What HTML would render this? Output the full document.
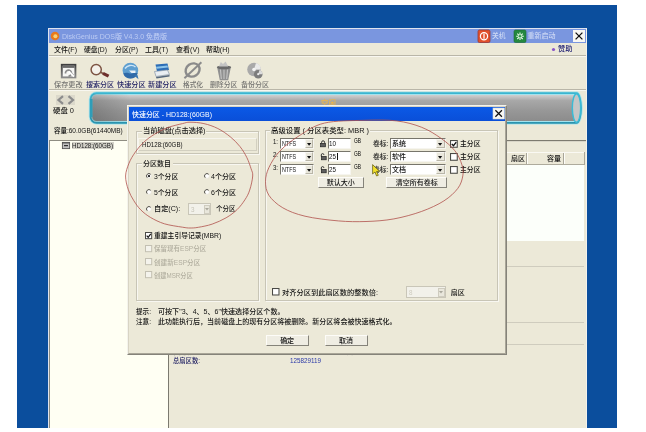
<!DOCTYPE html>
<html lang="zh-CN"><head><meta charset="utf-8"><title>DiskGenius</title>
<style>
html,body{margin:0;padding:0;background:#fff;}
body{width:646px;height:432px;overflow:hidden;position:relative;font-family:"Liberation Sans", "Noto Sans CJK SC", sans-serif;}
#root{position:absolute;left:0;top:0;width:646px;height:432px;overflow:hidden;will-change:transform;filter:blur(.42px);}
#root div{position:absolute;box-sizing:border-box;}
#root svg{position:absolute;overflow:visible;}
.t{position:absolute;white-space:nowrap;transform-origin:0 50%;font-weight:500;}
</style></head><body><div id="root">
<div style="left:17px;top:5px;width:600.00px;height:422.50px;background:#0b4e9d;"></div>
<div style="left:47.5px;top:27.5px;width:539.00px;height:400.00px;background:#ece9d8;border-left:1px solid #dfe3ee;border-top:1px solid #dfe3ee;border-right:1.500px solid #f3f2ec;"></div>
<div style="left:48.5px;top:28.5px;width:537.00px;height:14.50px;background:#7a96df;"></div>
<svg style="left:49.5px;top:31px" width="10" height="10" viewBox="0 0 10 10"><circle cx="5" cy="5" r="4.3" fill="#e8791c"/><circle cx="5.4" cy="5.2" r="2" fill="#f6d27a"/></svg>
<span id="t0" class="t" style="left:62px;top:31.50px;font-size:7px;line-height:9px;color:#bccbf3;transform:scaleX(0.9997);">DiskGenius DOS版 V4.3.0 免费版</span>
<svg style="left:478px;top:29.5px" width="12" height="12.5" viewBox="0 0 12 12.5"><rect x="0" y="0" width="12" height="12.5" rx="1.5" fill="#e2502c" stroke="#9a3a34" stroke-width=".8"/><circle cx="6" cy="6.3" r="3.6" fill="none" stroke="#fff" stroke-width="1.2"/><rect x="5.4" y="3.6" width="1.2" height="5.2" fill="#fff"/></svg>
<span id="t1" class="t" style="left:492px;top:30.50px;font-size:7px;line-height:9px;color:#cdd8f4;transform:scaleX(0.9643);">关机</span>
<svg style="left:514px;top:29.5px" width="12" height="12.5" viewBox="0 0 12 12.5"><rect x="0" y="0" width="12" height="12.5" rx="1.5" fill="#24883f" stroke="#1c6a33" stroke-width=".6"/><g stroke="#eafbe9" stroke-width="1.1"><path d="M6 2.5v7.6M2.2 6.3h7.6M3.3 3.6l5.4 5.4M8.7 3.6l-5.4 5.4"/></g><circle cx="6" cy="6.3" r="1.3" fill="#2f9a49"/></svg>
<span id="t2" class="t" style="left:527.5px;top:30.50px;font-size:7px;line-height:9px;color:#cdd8f4;transform:scaleX(1.0000);">重新启动</span>
<svg style="left:572.5px;top:30px" width="12" height="12" viewBox="0 0 12 12"><rect x="0" y="0" width="12" height="12" fill="#f7f7f3"/><path d="M2.6 2.6l6.8 6.8M9.4 2.6l-6.8 6.8" stroke="#111" stroke-width="1.3"/></svg>
<span id="t3" class="t" style="left:54px;top:45.30px;font-size:7px;line-height:9px;color:#111;transform:scaleX(1.0020);">文件(F)</span>
<span id="t4" class="t" style="left:84px;top:45.30px;font-size:7px;line-height:9px;color:#111;transform:scaleX(0.9697);">硬盘(D)</span>
<span id="t5" class="t" style="left:115px;top:45.30px;font-size:7px;line-height:9px;color:#111;transform:scaleX(0.9853);">分区(P)</span>
<span id="t6" class="t" style="left:145px;top:45.30px;font-size:7px;line-height:9px;color:#111;transform:scaleX(1.0020);">工具(T)</span>
<span id="t7" class="t" style="left:175.5px;top:45.30px;font-size:7px;line-height:9px;color:#111;transform:scaleX(1.0067);">查看(V)</span>
<span id="t8" class="t" style="left:205.75px;top:45.30px;font-size:7px;line-height:9px;color:#111;transform:scaleX(0.9908);">帮助(H)</span>
<svg style="left:551px;top:46.7px" width="5" height="5" viewBox="0 0 5 5"><circle cx="2.5" cy="2.5" r="1.6" fill="#8a55c8"/></svg>
<span id="t9" class="t" style="left:558px;top:44.40px;font-size:7px;line-height:9px;color:#1a1a70;transform:scaleX(1.0357);">赞助</span>
<div style="left:48.5px;top:55px;width:537.00px;height:1.00px;background:#b9b6a8;"></div>
<div style="left:48.5px;top:56px;width:537.00px;height:1.00px;background:#f8f7f0;"></div>
<div style="left:48.5px;top:89.3px;width:537.00px;height:1.00px;background:#b9b6a8;"></div>
<div style="left:48.5px;top:90.3px;width:537.00px;height:0.90px;background:#f8f7f0;"></div>
<span id="t10" class="t" style="left:54px;top:80.10px;font-size:7px;line-height:9px;color:#747471;transform:scaleX(1.0179);">保存更改</span>
<span id="t11" class="t" style="left:86px;top:80.10px;font-size:7px;line-height:9px;color:#1b1b60;transform:scaleX(1.0000);">搜索分区</span>
<span id="t12" class="t" style="left:116.5px;top:80.10px;font-size:7px;line-height:9px;color:#1b1b60;transform:scaleX(1.0179);">快速分区</span>
<span id="t13" class="t" style="left:147.5px;top:80.10px;font-size:7px;line-height:9px;color:#1b1b60;transform:scaleX(1.0179);">新建分区</span>
<span id="t14" class="t" style="left:183px;top:80.10px;font-size:7px;line-height:9px;color:#747471;transform:scaleX(0.9524);">格式化</span>
<span id="t15" class="t" style="left:209.5px;top:80.10px;font-size:7px;line-height:9px;color:#747471;transform:scaleX(0.9821);">删除分区</span>
<span id="t16" class="t" style="left:241px;top:80.10px;font-size:7px;line-height:9px;color:#747471;transform:scaleX(1.0000);">备份分区</span>
<svg style="left:60px;top:63px" width="17" height="16" viewBox="0 0 17 16"><defs><linearGradient id="sv" x1="0" y1="0" x2="0" y2="1"><stop offset="0" stop-color="#3f3f3f"/><stop offset="1" stop-color="#8a8a8a"/></linearGradient></defs><rect x="1.800" y="1.800" width="13.600" height="12.600" fill="#f6f6f4" stroke="url(#sv)" stroke-width="1.900"/><rect x="2.600" y="2.600" width="12" height="2.300" fill="#6a6a6a"/><path d="M5.500 10.500a3 3 0 1 1 3 2.600" fill="none" stroke="#8d8d8d" stroke-width="1.700"/><path d="M9 8.500l5 5" stroke="#fff" stroke-width="1.800"/><path d="M10 8.200l4.600 4.500" stroke="#9a9a9a" stroke-width=".7"/></svg>
<svg style="left:88px;top:62px" width="23" height="18" viewBox="0 0 23 18"><circle cx="8.200" cy="7.600" r="5.100" fill="#f4f1ea" stroke="#7d5443" stroke-width="1.500"/><path d="M12.600 10.300l3 1.500" stroke="#7d5443" stroke-width="1.600"/><path d="M15 11.300l5.600 2.900" stroke="#6e2f2c" stroke-width="3.200"/></svg>
<svg style="left:121px;top:61.5px" width="20" height="19" viewBox="0 0 20 19"><circle cx="9.4" cy="8.6" r="7.8" fill="#5f9fd0"/><path d="M2.2 11.5a7.8 7.8 0 0 0 14.6 0c-2-1.6-4-.2-6 0s-5.6-1.8-8.600 0z" fill="#2f6aa8"/><path d="M4 6.5c2-3 7-4.500 10.500-1.500" stroke="#cfe6f6" stroke-width="1.400" fill="none"/><path d="M8 8.500h6.500v2.500h-4z" fill="#e8f0f6"/><path d="M13 13.500l4.500 3.800-1-4.300z" fill="#3a78b4"/></svg>
<svg style="left:152px;top:62px" width="20" height="18" viewBox="0 0 20 18"><path d="M3.500 2.500l12-1 1.500 6.500-12 1.500z" fill="#2c6db6"/><path d="M4 4.700l11.500-1.200.5 1.900-11.500 1.300z" fill="#8cc4ea"/><path d="M2.500 9.500l13-1.500 2 4.500-13.500 2z" fill="#e9eef2" stroke="#8795a6" stroke-width=".7"/><path d="M4 15l13.500-2v1.600l-13 2z" fill="#55677c"/></svg>
<svg style="left:183px;top:61px" width="20" height="20" viewBox="0 0 20 20"><ellipse cx="9.600" cy="9" rx="7.300" ry="6.300" transform="rotate(-35 9.600 9)" fill="none" stroke="#8b8b8b" stroke-width="2.400"/><path d="M1.400 17.300L18.400 1.200" stroke="#8b8b8b" stroke-width="1.900"/></svg>
<svg style="left:213.500px;top:60.500px" width="20" height="20" viewBox="0 0 20 20"><path d="M3.200 6.500h13.600l-2.600 12.700h-8.400z" fill="#909090"/><path d="M6.500 8.500l.8 9.500M10 8.500v9.500M13.500 8.500l-.8 9.500" stroke="#d8d8d8" stroke-width=".8"/><ellipse cx="10" cy="6.300" rx="7.200" ry="1.900" fill="#6a6a6a"/><path d="M5 5.400l1.800-4.400 2.200 2 2.600-2.600 2.600 5z" fill="#c4c4c4"/></svg>
<svg style="left:245px;top:61px" width="20" height="20" viewBox="0 0 20 20"><circle cx="9" cy="8.500" r="6.800" fill="#a9a9a9"/><path d="M9 8.500L15.800 8.500A6.800 6.800 0 0 0 11 2z" fill="#e9e9e9"/><circle cx="9" cy="8.500" r="1.800" fill="#f3f3f3"/><circle cx="13.200" cy="13.200" r="4.300" fill="#7c7c7c"/><path d="M13.200 13.200l4.300 0a4.300 4.300 0 0 0-3-4.100z" fill="#dcdcdc"/><circle cx="13.200" cy="13.200" r="1.100" fill="#eee"/></svg>
<div style="left:55.5px;top:94.5px;width:19.50px;height:10.00px;background:#dcd9cb;"></div>
<svg style="left:55.5px;top:94.5px" width="19.5" height="10" viewBox="0 0 19.5 10"><path d="M7 1.200L2.500 5 7 8.800" fill="none" stroke="#8c8c8c" stroke-width="2.200"/><path d="M12.500 1.200L17 5 12.500 8.800" fill="none" stroke="#8c8c8c" stroke-width="2.200"/></svg>
<span id="t17" class="t" style="left:53px;top:106.00px;font-size:7px;line-height:9px;color:#111;transform:scaleX(1.0583);">硬盘 0</span>
<svg style="left:0;top:0" width="646" height="432" viewBox="0 0 646 432">
<defs><linearGradient id="cy" x1="0" y1="0" x2="0" y2="1"><stop offset="0" stop-color="#dadada"/><stop offset=".1" stop-color="#c8c8c8"/><stop offset=".25" stop-color="#a8a8a8"/><stop offset=".6" stop-color="#979797"/><stop offset="1" stop-color="#8a8a8a"/></linearGradient>
<linearGradient id="cl" x1="0" y1="0" x2="1" y2="0"><stop offset="0" stop-color="#000" stop-opacity=".16"/><stop offset="1" stop-color="#000" stop-opacity="0"/></linearGradient><linearGradient id="cb" x1="0" y1="0" x2="0" y2="1"><stop offset="0" stop-color="#3cb6d0"/><stop offset="1" stop-color="#2a93ae"/></linearGradient></defs>
<path d="M96.500 93.200H576.500a4.500 14.800 0 0 1 0 29.600H96.500a6 6 0 0 1-6-6V99.200a6 6 0 0 1 6-6z" fill="url(#cy)" stroke="#a3e3ee" stroke-width="3.400"/>
<path d="M96.500 93.200H576.500a4.500 14.800 0 0 1 0 29.600H96.500a6 6 0 0 1-6-6V99.200a6 6 0 0 1 6-6z" fill="none" stroke="url(#cb)" stroke-width="1.700"/>
<rect x="91" y="94" width="40" height="28" rx="5" fill="url(#cl)"/><path d="M91.300 99V117" stroke="#2f9db8" stroke-width="2.400"/>
<ellipse cx="576.500" cy="108" rx="4.200" ry="14.300" fill="#c6c6c6" stroke="#3bbbd6" stroke-width="1.500"/>
</svg>
<span id="t18" class="t" style="left:320.5px;top:98.80px;font-size:8px;line-height:10px;color:#e2b458;transform:scaleX(0.9375);font-weight:700;">空闲</span>
<span id="t19" class="t" style="left:53.75px;top:125.50px;font-size:7px;line-height:9px;color:#111;transform:scaleX(0.9251);">容量:60.0GB(61440MB)</span>
<div style="left:48.5px;top:139.5px;width:119.50px;height:288.50px;background:#fffff3;border-top:1px solid #8f8d82;border-left:1px solid #8f8d82;"></div>
<div style="left:167.7px;top:139.5px;width:1.10px;height:288.50px;background:#7c7a6f;"></div>
<svg style="left:62px;top:142px" width="8" height="7" viewBox="0 0 8 7"><rect x=".4" y=".4" width="7.200" height="6.200" fill="#c2c2c2" stroke="#555" stroke-width=".9"/><path d="M.4 1h7.200" stroke="#444" stroke-width=".8"/><path d="M2 3.700h4" stroke="#111" stroke-width="1"/></svg>
<div style="left:71.5px;top:141.8px;width:42.30px;height:7.70px;background:#d3d1c8;"></div>
<span id="t20" class="t" style="left:72.3px;top:141.10px;font-size:7px;line-height:9px;color:#222;transform:scaleX(0.8856);">HD128:(60GB)</span>
<div style="left:169px;top:140px;width:416.50px;height:1.00px;background:#7d7b70;"></div>
<div style="left:169px;top:141px;width:416.50px;height:1.00px;background:#d9d6c8;"></div>
<div style="left:169px;top:152px;width:415.50px;height:12.50px;background:#ece9d8;border-bottom:1px solid #aeab9c;border-top:1px solid #faf9f3;"></div>
<div style="left:169px;top:164.5px;width:415.00px;height:76.80px;background:#fcfffa;"></div>
<div style="left:526px;top:153px;width:1.00px;height:10.50px;background:#a9a698;"></div>
<div style="left:527px;top:153px;width:1.00px;height:10.50px;background:#fdfdf8;"></div>
<div style="left:562.5px;top:153px;width:1.00px;height:10.50px;background:#a9a698;"></div>
<div style="left:563.5px;top:153px;width:1.00px;height:10.50px;background:#fdfdf8;"></div>
<div style="left:583.5px;top:152px;width:1.00px;height:12.50px;background:#a9a698;"></div>
<span id="t21" class="t" style="left:511px;top:153.80px;font-size:7px;line-height:9px;color:#111;transform:scaleX(1.0000);">扇区</span>
<span id="t22" class="t" style="left:547px;top:153.80px;font-size:7px;line-height:9px;color:#111;transform:scaleX(1.0000);">容量</span>
<div style="left:169px;top:266.2px;width:415.00px;height:1.00px;background:#cfccbe;"></div>
<div style="left:169px;top:321.9px;width:415.00px;height:1.00px;background:#cfccbe;"></div>
<div style="left:169px;top:343.9px;width:415.00px;height:1.00px;background:#cfccbe;"></div>
<span id="t23" class="t" style="left:173px;top:347.00px;font-size:7px;line-height:9px;color:#1b1b60;transform:scaleX(0.8713);">柱面数:</span>
<span id="t24" class="t" style="left:173px;top:356.10px;font-size:7px;line-height:9px;color:#1b1b60;transform:scaleX(0.9014);">总扇区数:</span>
<span id="t25" class="t" style="left:290px;top:355.80px;font-size:7px;line-height:9px;color:#2a38a8;transform:scaleX(0.8977);">125829119</span>
<span id="t26" class="t" style="left:334px;top:347.00px;font-size:7px;line-height:9px;color:#222244;transform:scaleX(0.9014);">扇区大小:</span>
<div style="left:127px;top:104.5px;width:379.80px;height:250.00px;background:#ece9d8;border:1px solid #f4f3ec;border-right:1.200px solid #85837a;border-bottom:1.200px solid #85837a;"></div>
<div style="left:128px;top:105.5px;width:377.80px;height:248.00px;border:1px solid #d8d4c4;border-right-color:#a9a698;border-bottom-color:#a9a698;"></div>
<div style="left:128.7px;top:106.8px;width:376.10px;height:14.20px;background:linear-gradient(#0b59e6,#0a4fd8);"></div>
<span id="t27" class="t" style="left:131.8px;top:109.80px;font-size:7px;line-height:9px;color:#fff;transform:scaleX(0.9934);">快速分区 - HD128:(60GB)</span>
<svg style="left:492.5px;top:108.400px" width="11.300" height="11" viewBox="0 0 11.300 11"><rect x="0" y="0" width="11.300" height="11" fill="#f7f7f3" stroke="#d8d8d0" stroke-width=".6"/><path d="M2.400 2.300l6.500 6.400M8.900 2.300l-6.500 6.400" stroke="#111" stroke-width="1.250"/></svg>
<div style="left:135.5px;top:130.5px;width:123.25px;height:23.25px;border:1px solid #c8c5b6;box-shadow:inset 1px 1px 0 #f8f7f1, 1px 1px 0 #f8f7f1;"></div>
<div style="left:141.5px;top:127px;width:64.50px;height:7.00px;background:#ece9d8;"></div>
<span id="t28" class="t" style="left:142.5px;top:126.10px;font-size:7px;line-height:9px;color:#111;transform:scaleX(1.0301);">当前磁盘(点击选择)</span>
<div style="left:138px;top:137.5px;width:118.50px;height:13.50px;border:1px solid #f6f5ee;border-right-color:#d2cfc0;border-bottom-color:#d2cfc0;"></div>
<span id="t29" class="t" style="left:142px;top:140.10px;font-size:7px;line-height:9px;color:#111;transform:scaleX(0.8748);">HD128:(60GB)</span>
<div style="left:135.5px;top:162.8px;width:123.25px;height:137.80px;border:1px solid #c8c5b6;box-shadow:inset 1px 1px 0 #f8f7f1, 1px 1px 0 #f8f7f1;"></div>
<div style="left:141.5px;top:159px;width:31.00px;height:7.00px;background:#ece9d8;"></div>
<span id="t30" class="t" style="left:143px;top:159.00px;font-size:7px;line-height:9px;color:#111;transform:scaleX(1.0000);">分区数目</span>
<svg style="left:145.5px;top:173px" width="6" height="6" viewBox="0 0 6 6"><circle cx="3" cy="3" r="2.400" fill="#fff" stroke="#e9e7dc" stroke-width=".9"/><path d="M1.200 4.700A2.400 2.400 0 0 1 4.700 1.300" fill="none" stroke="#55534c" stroke-width="1"/><circle cx="3" cy="3.100" r="1.100" fill="#111"/></svg>
<span id="t31" class="t" style="left:153.75px;top:172.30px;font-size:7px;line-height:9px;color:#111;transform:scaleX(0.9737);">3个分区</span>
<svg style="left:204px;top:173px" width="6" height="6" viewBox="0 0 6 6"><circle cx="3" cy="3" r="2.400" fill="#fff" stroke="#e9e7dc" stroke-width=".9"/><path d="M1.200 4.700A2.400 2.400 0 0 1 4.700 1.300" fill="none" stroke="#55534c" stroke-width="1"/></svg>
<span id="t32" class="t" style="left:211px;top:172.30px;font-size:7px;line-height:9px;color:#111;transform:scaleX(1.0038);">4个分区</span>
<svg style="left:145.5px;top:189px" width="6" height="6" viewBox="0 0 6 6"><circle cx="3" cy="3" r="2.400" fill="#fff" stroke="#e9e7dc" stroke-width=".9"/><path d="M1.200 4.700A2.400 2.400 0 0 1 4.700 1.300" fill="none" stroke="#55534c" stroke-width="1"/></svg>
<span id="t33" class="t" style="left:153.75px;top:187.70px;font-size:7px;line-height:9px;color:#111;transform:scaleX(0.9737);">5个分区</span>
<svg style="left:204px;top:189px" width="6" height="6" viewBox="0 0 6 6"><circle cx="3" cy="3" r="2.400" fill="#fff" stroke="#e9e7dc" stroke-width=".9"/><path d="M1.200 4.700A2.400 2.400 0 0 1 4.700 1.300" fill="none" stroke="#55534c" stroke-width="1"/></svg>
<span id="t34" class="t" style="left:211px;top:187.70px;font-size:7px;line-height:9px;color:#111;transform:scaleX(1.0038);">6个分区</span>
<svg style="left:145.5px;top:205.75px" width="6" height="6" viewBox="0 0 6 6"><circle cx="3" cy="3" r="2.400" fill="#fff" stroke="#e9e7dc" stroke-width=".9"/><path d="M1.200 4.700A2.400 2.400 0 0 1 4.700 1.300" fill="none" stroke="#55534c" stroke-width="1"/></svg>
<span id="t35" class="t" style="left:153.75px;top:204.40px;font-size:7px;line-height:9px;color:#111;transform:scaleX(1.0225);">自定(C):</span>
<div style="left:188px;top:203px;width:23.00px;height:12.00px;background:#f2f1ea;border:1px solid #c9c6b8;"></div>
<div style="left:203.5px;top:204.5px;width:6.50px;height:9.00px;background:#e9e7dc;border:1px solid #cfccbf;"></div>
<svg style="left:205px;top:207.800px" width="4" height="3" viewBox="0 0 4 3"><path d="M0 0h4L2 2.600z" fill="#aaa89c"/></svg>
<span id="t36" class="t" style="left:190.5px;top:204.50px;font-size:7px;line-height:9px;color:#c8c5b8;transform:scaleX(0.8960);">3</span>
<span id="t37" class="t" style="left:216px;top:204.40px;font-size:7px;line-height:9px;color:#111;transform:scaleX(0.9286);">个分区</span>
<svg style="left:145.3px;top:232.20000000000002px" width="7.2" height="7.2" viewBox="0 0 6.500 6.500"><rect x=".45" y=".45" width="5.600" height="5.600" fill="#fff" stroke="#4a4a46" stroke-width=".9"/><path d="M1.500 3.300l1.400 1.500 2.300-3" fill="none" stroke="#111" stroke-width="1.100"/></svg>
<span id="t38" class="t" style="left:153.75px;top:231.20px;font-size:7px;line-height:9px;color:#111;transform:scaleX(0.9716);">重建主引导记录(MBR)</span>
<svg style="left:145.3px;top:245.15px" width="7.2" height="7.2" viewBox="0 0 6.500 6.500"><rect x=".45" y=".45" width="5.600" height="5.600" fill="#f4f3ec" stroke="#c3c0b2" stroke-width=".9"/></svg>
<span id="t39" class="t" style="left:153.75px;top:244.40px;font-size:7px;line-height:9px;color:#b0ad9e;transform:scaleX(0.9328);">保留现有ESP分区</span>
<svg style="left:145.3px;top:258.4px" width="7.2" height="7.2" viewBox="0 0 6.500 6.500"><rect x=".45" y=".45" width="5.600" height="5.600" fill="#f4f3ec" stroke="#c3c0b2" stroke-width=".9"/></svg>
<span id="t40" class="t" style="left:153.75px;top:257.70px;font-size:7px;line-height:9px;color:#b0ad9e;transform:scaleX(0.9436);">创建新ESP分区</span>
<svg style="left:145.3px;top:271.4px" width="7.2" height="7.2" viewBox="0 0 6.500 6.500"><rect x=".45" y=".45" width="5.600" height="5.600" fill="#f4f3ec" stroke="#c3c0b2" stroke-width=".9"/></svg>
<span id="t41" class="t" style="left:153.75px;top:270.70px;font-size:7px;line-height:9px;color:#b0ad9e;transform:scaleX(0.8895);">创建MSR分区</span>
<span id="t42" class="t" style="left:136px;top:306.60px;font-size:7px;line-height:9px;color:#111;transform:scaleX(0.9403);">提示:</span>
<span id="t43" class="t" style="left:157.5px;top:306.60px;font-size:7px;line-height:9px;color:#111;transform:scaleX(1.0076);">可按下"3、4、5、6"快速选择分区个数。</span>
<span id="t44" class="t" style="left:136px;top:317.00px;font-size:7px;line-height:9px;color:#111;transform:scaleX(0.9403);">注意:</span>
<span id="t45" class="t" style="left:157.5px;top:317.00px;font-size:7px;line-height:9px;color:#111;transform:scaleX(1.0021);">此功能执行后，当前磁盘上的现有分区将被删除。新分区将会被快速格式化。</span>
<div style="left:265.5px;top:334.5px;width:43.25px;height:11.50px;background:#efede3;border:1px solid #fdfcf8;border-right:1px solid #85837a;border-bottom:1px solid #85837a;"></div>
<span id="t46" class="t" style="left:280.125px;top:335.95px;font-size:7px;line-height:9px;color:#111;transform:scaleX(1.0000);">确定</span>
<div style="left:324.5px;top:334.5px;width:43.00px;height:11.50px;background:#efede3;border:1px solid #fdfcf8;border-right:1px solid #85837a;border-bottom:1px solid #85837a;"></div>
<span id="t47" class="t" style="left:339.0px;top:335.95px;font-size:7px;line-height:9px;color:#111;transform:scaleX(1.0000);">取消</span>
<div style="left:264.5px;top:130px;width:233.90px;height:170.60px;border:1px solid #c8c5b6;box-shadow:inset 1px 1px 0 #f8f7f1, 1px 1px 0 #f8f7f1;"></div>
<div style="left:270px;top:126.5px;width:100.00px;height:7.00px;background:#ece9d8;"></div>
<span id="t48" class="t" style="left:271px;top:125.70px;font-size:7px;line-height:9px;color:#111;transform:scaleX(1.0543);">高级设置 ( 分区表类型: MBR )</span>
<span id="t49" class="t" style="left:272.5px;top:137.30px;font-size:7px;line-height:9px;color:#111;transform:scaleX(0.8556);">1:</span>
<div style="left:279.5px;top:138.2px;width:34.25px;height:10.80px;background:#fff;border:1px solid #f6f5ef;border-top-color:#77756b;border-left-color:#77756b;"></div>
<div style="left:304.9px;top:139.2px;width:8.05px;height:8.80px;background:#e9e7dc;border:.6px solid #f8f7f2;border-right-color:#b9b6a8;border-bottom-color:#b9b6a8;"></div>
<svg style="left:306.925px;top:142.5px" width="4.200" height="2.800" viewBox="0 0 4.200 2.800"><path d="M0 0h4.200L2.100 2.800z" fill="#111"/></svg>
<span id="t50" class="t" style="left:281.5px;top:139.30px;font-size:7px;line-height:9px;color:#111;transform:scaleX(0.7658);">NTFS</span>
<svg style="left:320.25px;top:140.0px" width="6.500" height="7.200" viewBox="0 0 6.500 7.200"><path d="M1.600 3.400V2.300a1.500 1.500 0 0 1 3 0V3.400" fill="none" stroke="#333" stroke-width="1"/><rect x="0.6" y="3.400" width="4.800" height="3.400" fill="#5e5e5e" stroke="#222" stroke-width=".7"/></svg>
<div style="left:327.5px;top:138.2px;width:23.00px;height:10.80px;background:#fff;border:1px solid #f6f5ef;border-top-color:#77756b;border-left-color:#77756b;"></div>
<span id="t51" class="t" style="left:329.3px;top:139.30px;font-size:7px;line-height:9px;color:#111;transform:scaleX(0.8978);">10</span>
<span id="t52" class="t" style="left:353.9px;top:137.15px;font-size:6.5px;line-height:8.5px;color:#000;transform:scaleX(0.7442);">GB</span>
<span id="t53" class="t" style="left:372.5px;top:139.30px;font-size:7px;line-height:9px;color:#111;transform:scaleX(0.9716);">卷标:</span>
<div style="left:390px;top:138.2px;width:55.50px;height:10.80px;background:#fff;border:1px solid #f6f5ef;border-top-color:#77756b;border-left-color:#77756b;"></div>
<div style="left:435.9px;top:139.2px;width:8.80px;height:8.80px;background:#e9e7dc;border:.6px solid #f8f7f2;border-right-color:#b9b6a8;border-bottom-color:#b9b6a8;"></div>
<svg style="left:438.3px;top:142.5px" width="4.200" height="2.800" viewBox="0 0 4.200 2.800"><path d="M0 0h4.200L2.100 2.800z" fill="#111"/></svg>
<span id="t54" class="t" style="left:392px;top:139.30px;font-size:7px;line-height:9px;color:#111;transform:scaleX(1.0000);">系统</span>
<svg style="left:450.3px;top:139.7px" width="7.8" height="7.8" viewBox="0 0 6.500 6.500"><rect x=".45" y=".45" width="5.600" height="5.600" fill="#fff" stroke="#4a4a46" stroke-width=".9"/><path d="M1.500 3.300l1.400 1.500 2.300-3" fill="none" stroke="#111" stroke-width="1.100"/></svg>
<span id="t55" class="t" style="left:459.5px;top:139.30px;font-size:7px;line-height:9px;color:#111;transform:scaleX(0.9762);">主分区</span>
<span id="t56" class="t" style="left:272.5px;top:150.30px;font-size:7px;line-height:9px;color:#111;transform:scaleX(0.8556);">2:</span>
<div style="left:279.5px;top:151.2px;width:34.25px;height:10.80px;background:#fff;border:1px solid #f6f5ef;border-top-color:#77756b;border-left-color:#77756b;"></div>
<div style="left:304.9px;top:152.2px;width:8.05px;height:8.80px;background:#e9e7dc;border:.6px solid #f8f7f2;border-right-color:#b9b6a8;border-bottom-color:#b9b6a8;"></div>
<svg style="left:306.925px;top:155.5px" width="4.200" height="2.800" viewBox="0 0 4.200 2.800"><path d="M0 0h4.200L2.100 2.800z" fill="#111"/></svg>
<span id="t57" class="t" style="left:281.5px;top:152.30px;font-size:7px;line-height:9px;color:#111;transform:scaleX(0.7658);">NTFS</span>
<svg style="left:320.25px;top:153.0px" width="6.500" height="7.200" viewBox="0 0 6.500 7.200"><path d="M1.300 3.400V1.900a1.300 1.300 0 0 1 2.600 0" fill="none" stroke="#333" stroke-width="1"/><rect x="1.4" y="3.400" width="4.800" height="3.400" fill="#5e5e5e" stroke="#222" stroke-width=".7"/></svg>
<div style="left:327.5px;top:151.2px;width:23.00px;height:10.80px;background:#fff;border:1px solid #f6f5ef;border-top-color:#77756b;border-left-color:#77756b;"></div>
<span id="t58" class="t" style="left:329.3px;top:152.30px;font-size:7px;line-height:9px;color:#111;transform:scaleX(0.8978);">25</span>
<span id="t59" class="t" style="left:353.9px;top:150.15px;font-size:6.5px;line-height:8.5px;color:#000;transform:scaleX(0.7442);">GB</span>
<span id="t60" class="t" style="left:372.5px;top:152.30px;font-size:7px;line-height:9px;color:#111;transform:scaleX(0.9716);">卷标:</span>
<div style="left:390px;top:151.2px;width:55.50px;height:10.80px;background:#fff;border:1px solid #f6f5ef;border-top-color:#77756b;border-left-color:#77756b;"></div>
<div style="left:435.9px;top:152.2px;width:8.80px;height:8.80px;background:#e9e7dc;border:.6px solid #f8f7f2;border-right-color:#b9b6a8;border-bottom-color:#b9b6a8;"></div>
<svg style="left:438.3px;top:155.5px" width="4.200" height="2.800" viewBox="0 0 4.200 2.800"><path d="M0 0h4.200L2.100 2.800z" fill="#111"/></svg>
<span id="t61" class="t" style="left:392px;top:152.30px;font-size:7px;line-height:9px;color:#111;transform:scaleX(1.0000);">软件</span>
<svg style="left:450.3px;top:152.7px" width="7.8" height="7.8" viewBox="0 0 6.500 6.500"><rect x=".45" y=".45" width="5.600" height="5.600" fill="#fff" stroke="#4a4a46" stroke-width=".9"/></svg>
<span id="t62" class="t" style="left:459.5px;top:152.30px;font-size:7px;line-height:9px;color:#111;transform:scaleX(0.9762);">主分区</span>
<span id="t63" class="t" style="left:272.5px;top:163.30px;font-size:7px;line-height:9px;color:#111;transform:scaleX(0.8556);">3:</span>
<div style="left:279.5px;top:164.2px;width:34.25px;height:10.80px;background:#fff;border:1px solid #f6f5ef;border-top-color:#77756b;border-left-color:#77756b;"></div>
<div style="left:304.9px;top:165.2px;width:8.05px;height:8.80px;background:#e9e7dc;border:.6px solid #f8f7f2;border-right-color:#b9b6a8;border-bottom-color:#b9b6a8;"></div>
<svg style="left:306.925px;top:168.5px" width="4.200" height="2.800" viewBox="0 0 4.200 2.800"><path d="M0 0h4.200L2.100 2.800z" fill="#111"/></svg>
<span id="t64" class="t" style="left:281.5px;top:165.30px;font-size:7px;line-height:9px;color:#111;transform:scaleX(0.7658);">NTFS</span>
<svg style="left:320.25px;top:166.0px" width="6.500" height="7.200" viewBox="0 0 6.500 7.200"><path d="M1.300 3.400V1.900a1.300 1.300 0 0 1 2.600 0" fill="none" stroke="#333" stroke-width="1"/><rect x="1.4" y="3.400" width="4.800" height="3.400" fill="#5e5e5e" stroke="#222" stroke-width=".7"/></svg>
<div style="left:327.5px;top:164.2px;width:23.00px;height:10.80px;background:#fff;border:1px solid #f6f5ef;border-top-color:#77756b;border-left-color:#77756b;"></div>
<span id="t65" class="t" style="left:329.3px;top:165.30px;font-size:7px;line-height:9px;color:#111;transform:scaleX(0.8978);">25</span>
<span id="t66" class="t" style="left:353.9px;top:163.15px;font-size:6.5px;line-height:8.5px;color:#000;transform:scaleX(0.7442);">GB</span>
<span id="t67" class="t" style="left:372.5px;top:165.30px;font-size:7px;line-height:9px;color:#111;transform:scaleX(0.9716);">卷标:</span>
<div style="left:390px;top:164.2px;width:55.50px;height:10.80px;background:#fff;border:1px solid #f6f5ef;border-top-color:#77756b;border-left-color:#77756b;"></div>
<div style="left:435.9px;top:165.2px;width:8.80px;height:8.80px;background:#e9e7dc;border:.6px solid #f8f7f2;border-right-color:#b9b6a8;border-bottom-color:#b9b6a8;"></div>
<svg style="left:438.3px;top:168.5px" width="4.200" height="2.800" viewBox="0 0 4.200 2.800"><path d="M0 0h4.200L2.100 2.800z" fill="#111"/></svg>
<span id="t68" class="t" style="left:392px;top:165.30px;font-size:7px;line-height:9px;color:#111;transform:scaleX(1.0000);">文档</span>
<svg style="left:450.3px;top:165.7px" width="7.8" height="7.8" viewBox="0 0 6.500 6.500"><rect x=".45" y=".45" width="5.600" height="5.600" fill="#fff" stroke="#4a4a46" stroke-width=".9"/></svg>
<span id="t69" class="t" style="left:459.5px;top:165.30px;font-size:7px;line-height:9px;color:#111;transform:scaleX(0.9762);">主分区</span>
<div style="left:337.3px;top:152.8px;width:0.80px;height:7.60px;background:#111;"></div>
<div style="left:317.5px;top:176.6px;width:46.70px;height:11.60px;background:#efede3;border:1px solid #fdfcf8;border-right:1px solid #85837a;border-bottom:1px solid #85837a;"></div>
<span id="t70" class="t" style="left:326.85px;top:178.10px;font-size:7px;line-height:9px;color:#111;transform:scaleX(1.0000);">默认大小</span>
<div style="left:386px;top:176.6px;width:61.30px;height:11.60px;background:#efede3;border:1px solid #fdfcf8;border-right:1px solid #85837a;border-bottom:1px solid #85837a;"></div>
<span id="t71" class="t" style="left:395.65px;top:178.10px;font-size:7px;line-height:9px;color:#111;transform:scaleX(1.0000);">清空所有卷标</span>
<svg style="left:272px;top:288.25px" width="7.5" height="7.5" viewBox="0 0 6.500 6.500"><rect x=".45" y=".45" width="5.600" height="5.600" fill="#fff" stroke="#4a4a46" stroke-width=".9"/></svg>
<span id="t72" class="t" style="left:282px;top:287.70px;font-size:7px;line-height:9px;color:#111;transform:scaleX(1.0328);">对齐分区到此扇区数的整数倍:</span>
<div style="left:406px;top:286px;width:40.00px;height:12.00px;background:#f2f1ea;border:1px solid #c9c6b8;"></div>
<div style="left:437.5px;top:287.5px;width:7.00px;height:9.00px;background:#e9e7dc;border:1px solid #cfccbf;"></div>
<svg style="left:439.200px;top:290.800px" width="4" height="3" viewBox="0 0 4 3"><path d="M0 0h4L2 2.600z" fill="#aaa89c"/></svg>
<span id="t73" class="t" style="left:408.5px;top:287.70px;font-size:7px;line-height:9px;color:#cfccc0;transform:scaleX(0.8960);">8</span>
<span id="t74" class="t" style="left:450.75px;top:287.70px;font-size:7px;line-height:9px;color:#111;transform:scaleX(1.0000);">扇区</span>
<svg style="left:0;top:0" width="646" height="432" viewBox="0 0 646 432"><path d="M190.0 122.2C193.6 122.2 199.3 122.5 203.9 123.6C208.5 124.6 213.4 126.3 217.8 128.5C222.2 130.7 226.6 133.8 230.3 136.8C234.0 139.8 237.2 143.1 240.0 146.6C242.8 150.1 245.1 154.0 246.9 157.7C248.8 161.4 250.1 165.8 251.1 168.8C252.1 171.9 252.9 172.4 252.7 176.0C252.5 179.6 251.0 186.1 249.7 190.1C248.4 194.1 247.0 196.6 244.9 199.8C242.8 203.0 240.3 206.5 237.2 209.5C234.1 212.5 230.3 215.4 226.1 217.8C221.9 220.2 216.8 222.5 212.2 224.1C207.6 225.7 202.0 226.7 198.3 227.3C194.6 228.0 192.6 228.0 190.0 228.0C187.4 228.0 186.8 227.9 182.5 227.2C178.2 226.5 169.7 225.4 164.4 223.8C159.1 222.1 154.5 219.8 150.6 217.5C146.7 215.2 143.6 212.7 140.8 209.9C138.0 207.1 136.0 204.2 133.9 200.8C131.8 197.4 129.7 193.8 128.3 189.7C126.9 185.6 125.5 180.4 125.6 176.0C125.7 171.6 127.4 167.2 129.0 163.2C130.6 159.2 132.9 155.6 135.3 152.1C137.7 148.6 140.4 145.4 143.6 142.4C146.8 139.4 150.8 136.5 154.7 134.1C158.6 131.7 162.6 129.6 167.2 127.8C171.8 126.0 178.7 124.5 182.5 123.6C186.3 122.7 186.4 122.2 190.0 122.2Z" fill="none" stroke="#b0504b" stroke-width=".8"/><path d="M364.0 120.3C376.1 119.9 387.1 119.7 396.7 120.9C406.3 122.1 414.3 124.4 421.7 127.3C429.1 130.2 435.6 134.5 441.1 138.4C446.7 142.3 451.5 146.5 455.0 150.9C458.5 155.3 460.6 160.6 461.9 164.8C463.2 169.0 463.5 172.0 462.8 175.9C462.1 179.8 461.0 184.2 457.8 188.4C454.6 192.6 449.9 197.1 443.9 200.9C437.9 204.7 430.0 208.4 421.7 211.4C413.4 214.4 403.2 217.2 393.9 218.9C384.6 220.6 375.3 221.2 366.0 221.5C356.7 221.8 348.5 221.8 338.3 220.9C328.1 220.0 314.2 218.4 305.0 216.2C295.8 214.0 288.8 211.3 282.8 207.8C276.8 204.3 271.8 199.7 268.9 195.3C266.0 190.9 265.6 186.0 265.6 181.4C265.6 176.8 266.5 172.7 268.9 167.6C271.3 162.5 274.9 156.2 280.0 150.9C285.1 145.6 292.0 140.2 299.4 135.6C306.8 131.0 313.6 125.6 324.4 123.1C335.2 120.5 351.9 120.7 364.0 120.3Z" fill="none" stroke="#b0504b" stroke-width=".8"/></svg>
<svg style="left:372px;top:163.500px" width="9" height="13" viewBox="0 0 9 13"><path d="M.6.600V10l2.300-2 1.700 4 1.700-.7-1.700-3.900h3.100z" fill="#f3e12a" stroke="#5a5410" stroke-width=".7"/></svg>
</div></body></html>
